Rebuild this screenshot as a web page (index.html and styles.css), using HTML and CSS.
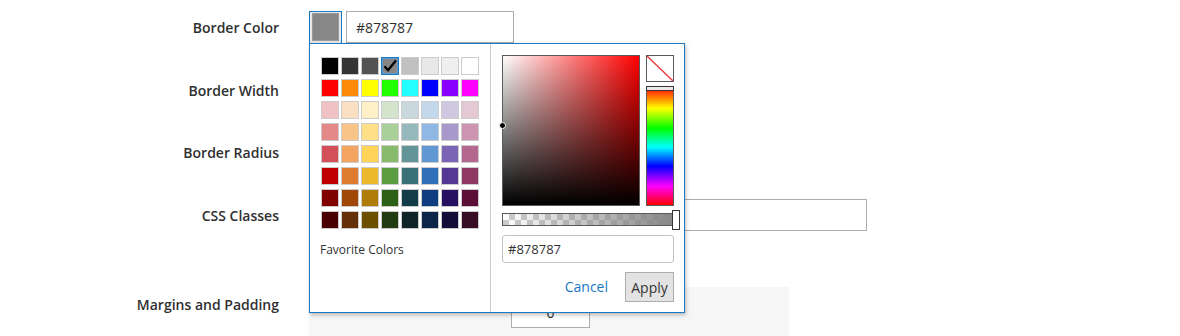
FILE: index.html
```html
<!DOCTYPE html>
<html lang="en">
  <head>
    <meta charset="UTF-8" />
    <meta name="viewport" content="width=device-width, initial-scale=1.0" />
    <title>Border Settings</title>
    <link rel="stylesheet" href="styles.css">
  </head>
  <body>
    <div id="page">
      <div id="form">
        <div class="row">
          <label class="label">Border Color</label>
          <div class="control">
            <button class="swatchButton"><span class="swatchInner"></span></button>
            <input class="textInput colorInput" type="text" value="#878787">
          </div>
        </div>
        <div class="row">
          <label class="label">Border Width</label>
          <div class="control">
            <input class="textInput smallInput" type="text" value="1">
          </div>
        </div>
        <div class="row">
          <label class="label">Border Radius</label>
          <div class="control">
            <input class="textInput smallInput" type="text" value="0">
          </div>
        </div>
        <div class="row">
          <label class="label">CSS Classes</label>
          <div class="control">
            <input class="textInput wideInput" type="text" value="">
          </div>
        </div>
        <div class="row marginsRow">
          <label class="label">Margins and Padding</label>
          <div class="spacingBox">
            <input class="textInput spacingInput" type="text" value="0">
          </div>
        </div>
      </div>

      <div id="picker">
        <div id="palettePanel">
          <div id="palette"></div>
          <p id="favorites">Favorite Colors</p>
        </div>
        <div id="customPanel">
          <div class="pickerTop">
            <div class="satBox">
              <span class="satDot"></span>
            </div>
            <div class="sideColumn">
              <div class="noneBox">
                <svg width="26" height="25" viewBox="0 0 26 25">
                  <line x1="0" y1="0" x2="26" y2="25" stroke="#ee3b3b" stroke-width="1.4" />
                </svg>
              </div>
              <div class="hueStrip">
                <span class="hueHandle"></span>
              </div>
            </div>
          </div>
          <div class="alphaStrip">
            <span class="alphaFill"></span>
            <span class="alphaHandle"></span>
          </div>
          <input class="hexInput" type="text" value="#878787">
          <div class="pickerButtons">
            <a class="cancelLink">Cancel</a>
            <button class="applyButton">Apply</button>
          </div>
        </div>
      </div>
    </div>

    <script>
      const paletteElement = document.getElementById("palette");
      const selectedColor = "#878787";

      const paletteRows = [
        ["#000000", "#343434", "#535353", "#878787", "#c0c0c0", "#e8e8e8", "#efefef", "#ffffff"],
        ["#ff0000", "#ff8a0a", "#ffff00", "#22ff00", "#22ffff", "#0000ff", "#8800ff", "#ff00ff"],
        ["#f0c2c4", "#fbe0c4", "#fff0c8", "#d4e4cc", "#c8d8dc", "#c4d8ec", "#d0c8e0", "#e4c8d4"],
        ["#e48888", "#f8c488", "#ffe088", "#a8d098", "#94b8bc", "#90b8e4", "#a898cc", "#cc94b0"],
        ["#d45058", "#f4a460", "#ffd458", "#88bc6c", "#629498", "#6098d4", "#7c64b4", "#b46890"],
        ["#c00000", "#e07c30", "#ecb82c", "#5c9c40", "#387078", "#3070b8", "#543894", "#903864"],
        ["#800000", "#a04808", "#b07c08", "#2c6014", "#143c48", "#103c80", "#281060", "#5c1038"],
        ["#480000", "#643008", "#6c5000", "#203c10", "#102428", "#0c2448", "#140c38", "#380c24"]
      ];

      paletteRows.forEach((row) => {
        row.forEach((color) => {
          const swatch = document.createElement("span");
          swatch.className = "swatch";
          swatch.style.background = color;
          if (color === selectedColor) {
            swatch.classList.add("selected");
            swatch.innerHTML =
              '<svg width="16" height="16" viewBox="0 0 16 16"><path d="M2.5 8.2 L6 12.2 L14 2.5" fill="none" stroke="#000" stroke-width="2.4" /></svg>';
          }
          paletteElement.appendChild(swatch);
        });
      });
    </script>
  </body>
</html>
```

FILE: styles.css
```css
body {
  margin: 0;
  font-family: "Open Sans", Arial, sans-serif;
  color: #303030;
  background: #ffffff;
}
#page {
  position: relative;
  height: 336px;
  overflow: hidden;
}
#form {
  padding-top: 11px;
  display: flex;
  flex-direction: column;
  gap: 30.67px;
}
.row {
  display: flex;
  align-items: center;
  gap: 30px;
  height: 32px;
}
.label {
  width: 279px;
  text-align: right;
  font-size: 14px;
  font-weight: 600;
  line-height: 20px;
  padding-top: 2px;
}
.control {
  display: flex;
  align-items: center;
  gap: 4px;
}
.textInput {
  box-sizing: border-box;
  height: 32px;
  border: 1px solid #adadad;
  padding: 0 9px;
  font-family: "Open Sans", Arial, sans-serif;
  font-size: 14px;
  color: #303030;
  background: #ffffff;
}
.colorInput {
  width: 168px;
}
.smallInput {
  width: 80px;
}
.wideInput {
  width: 558px;
}
.swatchButton {
  box-sizing: border-box;
  width: 33px;
  height: 33px;
  padding: 2px;
  border: 1px solid #1979c3;
  background: #e8e8e8;
  display: flex;
  align-items: center;
  justify-content: center;
}
.swatchInner {
  display: block;
  width: 25px;
  height: 26px;
  background: #878787;
  border: 1px solid #9a9a9a;
}
.marginsRow {
  margin-top: 25px;
  height: 60px;
  align-items: flex-start;
}
.marginsRow .label {
  margin-top: 8px;
  padding-top: 0;
}
.spacingBox {
  width: 480px;
  height: 60px;
  background: #f6f6f6;
  padding: 11px 0 0 202px;
  box-sizing: border-box;
}
.spacingInput {
  width: 79px;
  height: 30px;
  text-align: center;
  padding: 0;
}

/* color picker popup */
#picker {
  position: absolute;
  left: 309px;
  top: 43px;
  width: 376px;
  height: 270px;
  box-sizing: border-box;
  border: 1px solid #1979c3;
  background: #ffffff;
  box-shadow: 1px 2px 4px rgba(0, 0, 0, 0.25);
  display: flex;
  z-index: 2;
}
#palettePanel {
  width: 181px;
  box-sizing: border-box;
  border-right: 1px solid #cccccc;
  padding: 13px 0 0 11px;
}
#palette {
  display: grid;
  grid-template-columns: repeat(8, 18px);
  grid-auto-rows: 18px;
  column-gap: 2px;
  row-gap: 4px;
}
.swatch {
  box-sizing: border-box;
  border: 1px solid #cccccc;
  display: flex;
  align-items: center;
  justify-content: center;
}
.swatch.selected {
  border: 1px solid #1979c3;
  box-shadow: inset 0 0 0 1px #5d9ad0;
}
#favorites {
  margin: 13px 0 0 -1px;
  font-size: 12px;
  line-height: 16px;
  color: #333333;
}
#customPanel {
  flex: 1;
  padding: 11px 0 0 11px;
}
.pickerTop {
  display: flex;
  gap: 6px;
}
.satBox {
  position: relative;
  width: 138px;
  height: 151px;
  box-sizing: border-box;
  border: 1px solid #5a5a5a;
  background: linear-gradient(to top, #000000, rgba(0, 0, 0, 0)),
    linear-gradient(to right, #ffffff, rgba(255, 255, 255, 0)), #ff0000;
}
.satDot {
  position: absolute;
  left: -4px;
  top: 66px;
  width: 5px;
  height: 5px;
  border-radius: 50%;
  background: #000000;
  border: 1px solid #ffffff;
}
.sideColumn {
  display: flex;
  flex-direction: column;
  gap: 4px;
  width: 28px;
}
.noneBox {
  box-sizing: border-box;
  height: 27px;
  border: 1px solid #5a5a5a;
  background: #ffffff;
}
.noneBox svg {
  display: block;
}
.hueStrip {
  position: relative;
  box-sizing: border-box;
  height: 120px;
  border: 1px solid #5a5a5a;
  background: linear-gradient(to bottom, #ff0000, #ffff00 18%, #00ff00 35%, #00ffff 51%, #0000ff 67%, #ff00ff 84%, #ff0000);
}
.hueHandle {
  position: absolute;
  left: -1px;
  right: -1px;
  top: -1px;
  height: 3px;
  background: #efe8e8;
  border: 1px solid #333333;
}
.alphaStrip {
  position: relative;
  margin-top: 7px;
  width: 172px;
  height: 13px;
  box-sizing: border-box;
  border: 1px solid #5a5a5a;
  background-color: #ffffff;
  background-image: linear-gradient(45deg, #cccccc 25%, transparent 25%, transparent 75%, #cccccc 75%),
    linear-gradient(45deg, #cccccc 25%, transparent 25%, transparent 75%, #cccccc 75%);
  background-size: 12px 12px;
  background-position: 0 0, 6px 6px;
}
.alphaFill {
  position: absolute;
  inset: 0;
  background: linear-gradient(to right, rgba(135, 135, 135, 0), #878787);
}
.alphaHandle {
  position: absolute;
  right: -7px;
  top: -4px;
  width: 6px;
  height: 18px;
  background: #ffffff;
  border: 1px solid #333333;
}
.hexInput {
  display: block;
  margin-top: 9px;
  width: 172px;
  height: 28px;
  box-sizing: border-box;
  border: 1px solid #c2c2c2;
  border-radius: 3px;
  padding: 0 5px;
  font-family: "Open Sans", Arial, sans-serif;
  font-size: 13px;
  color: #333333;
}
.pickerButtons {
  margin-top: 9px;
  width: 172px;
  display: flex;
  justify-content: flex-end;
  align-items: center;
  gap: 17px;
}
.cancelLink {
  color: #1979c3;
  font-size: 14px;
  margin-top: -2px;
}
.applyButton {
  width: 49px;
  height: 30px;
  border: 1px solid #adadad;
  background: #e3e3e3;
  font-family: "Open Sans", Arial, sans-serif;
  font-size: 14px;
  color: #333333;
  padding: 0;
}
```
